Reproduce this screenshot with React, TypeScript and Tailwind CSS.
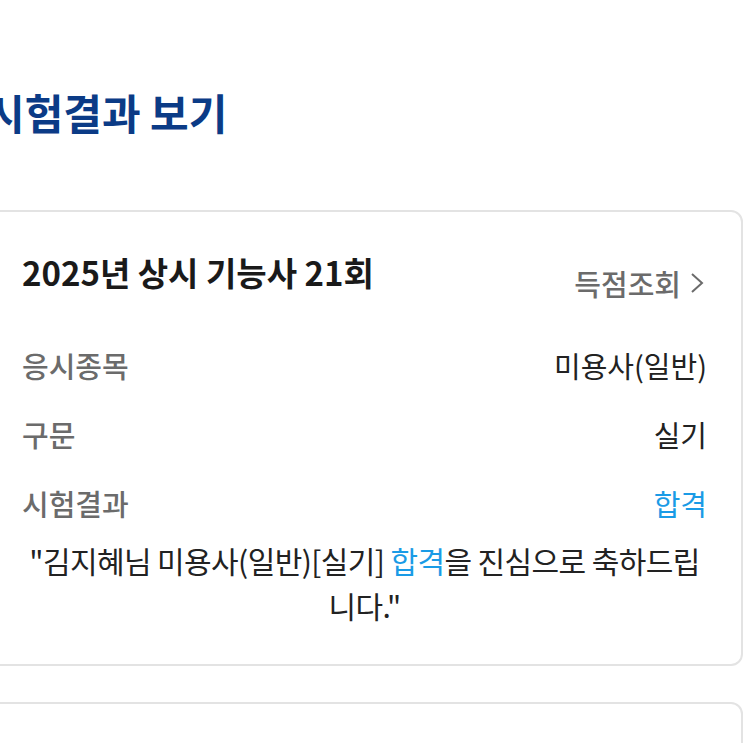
import React from "react";

const font = { fontFamily: '"Noto Sans CJK KR", "Noto Sans", sans-serif' };

function Row({ label, value, valueClass }: { label: string; value: string; valueClass: string }) {
  return (
    <div className="flex items-center justify-between h-[69px]">
      <span className="text-[29px] font-medium text-[#6b6b6b]">{label}</span>
      <span className={`text-[29px] ${valueClass}`}>{value}</span>
    </div>
  );
}

export default function App() {
  return (
    <div className="w-[743px] h-[743px] overflow-hidden bg-white" style={font}>
      <div className="ml-[-14px] w-[757px] pt-[80px]">
        <h1 className="text-[42px] font-bold text-[#0b3b86] leading-[64px]">시험결과 보기</h1>
        <div className="mt-[66px] border-2 border-[#e3e3e3] rounded-[12px] px-[34px] pt-[35px] pb-[36px]">
          <div className="flex items-start justify-between">
            <h2 className="text-[33px] font-bold text-[#1a1a1a] leading-[50px]">2025년 상시 기능사 21회</h2>
            <div className="flex items-center mt-[14px] text-[#6b6b6b]">
              <span className="text-[29px] font-medium leading-[44px]">득점조회</span>
              <svg width="20" height="26" viewBox="0 0 20 26" className="ml-[6px]" fill="none" stroke="#6b6b6b" strokeWidth="2">
                <path d="M5 4 L15 13 L5 22" />
              </svg>
            </div>
          </div>
          <div className="mt-[26px]">
            <Row label="응시종목" value="미용사(일반)" valueClass="text-[#222]" />
            <Row label="구문" value="실기" valueClass="text-[#222]" />
            <Row label="시험결과" value="합격" valueClass="text-[#1a9be6]" />
          </div>
          <p className="text-center text-[30px] leading-[45px] text-[#222] tracking-[-0.6px]">
            "김지혜님 미용사(일반)[실기] <span className="text-[#1a9be6]">합격</span>을 진심으로 축하드립
            <br />
            니다."
          </p>
        </div>
        <div className="mt-[36px] h-[100px] border-2 border-[#e3e3e3] rounded-[12px]"></div>
      </div>
    </div>
  );
}
